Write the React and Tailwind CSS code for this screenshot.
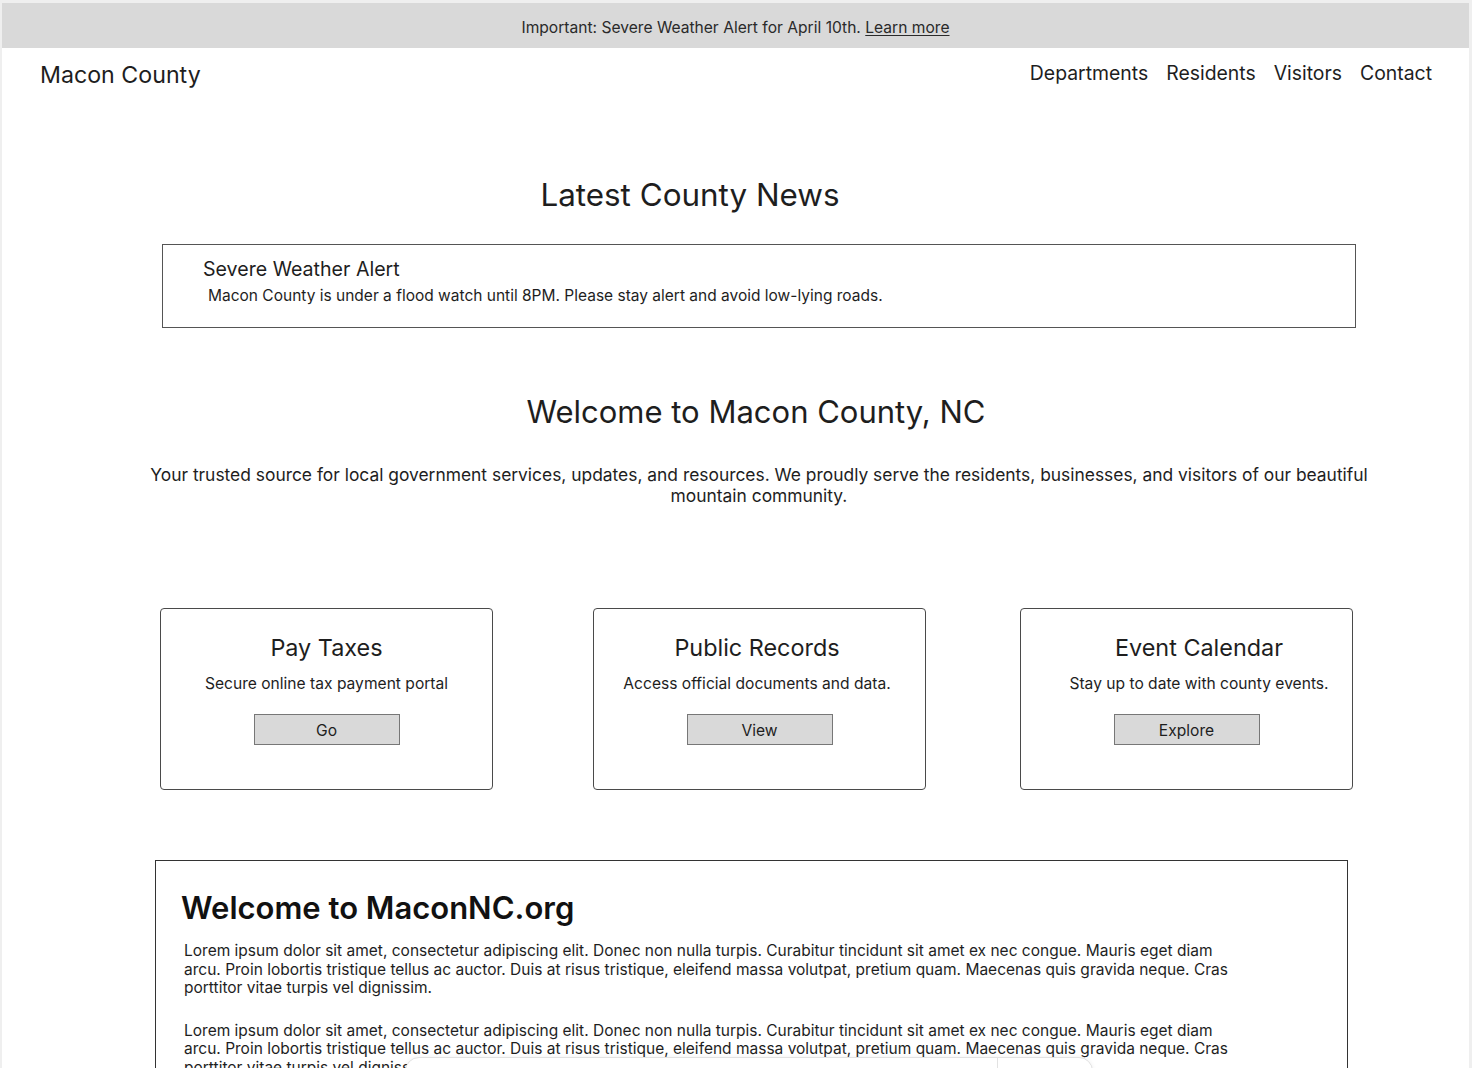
import React from "react";

const font = { fontFamily: "Inter, 'Noto Sans', sans-serif" };

function Card({ title, desc, btn, ml, shift }) {
  return (
    <div className={`w-[333px] h-[182px] border border-[#4a4a4a] rounded-[4px] flex flex-col items-center pt-[25px] ${ml}`}>
      <div className={`text-[23.4px] leading-[28px] text-[#1e1e1e] ${shift}`}>{title}</div>
      <div className={`mt-[12px] text-[15.6px] leading-[20px] text-[#1e1e1e] ${shift}`}>{desc}</div>
      <div className="mt-[20px] w-[146px] h-[31px] bg-[#d9d9d9] border border-[#777] flex items-center justify-center pt-[2px] text-[15.6px] text-[#1e1e1e]">
        {btn}
      </div>
    </div>
  );
}

const lorem =
  "Lorem ipsum dolor sit amet, consectetur adipiscing elit. Donec non nulla turpis. Curabitur tincidunt sit amet ex nec congue. Mauris eget diam arcu. Proin lobortis tristique tellus ac auctor. Duis at risus tristique, eleifend massa volutpat, pretium quam. Maecenas quis gravida neque. Cras porttitor vitae turpis vel dignissim.";

export default function App() {
  return (
    <div style={font} className="relative w-[1472px] h-[1068px] overflow-hidden bg-[#efefef] pt-[3px] pl-[2px] pr-[3px]">
      <div className="bg-white h-full">
        {/* Banner */}
        <div className="h-[45px] bg-[#d9d9d9] flex items-center justify-center pt-[4px] text-[15.6px] text-[#2a2a2a]">
          <span>
            Important: Severe Weather Alert for April 10th.{" "}
            <span className="underline underline-offset-2">Learn more</span>
          </span>
        </div>

        {/* Nav */}
        <div className="flex items-start justify-between pl-[38px] pr-[37px] pt-[12px]">
          <div className="text-[23.2px] leading-[30px] text-[#1e1e1e]">Macon County</div>
          <nav className="flex gap-[18px] text-[19.4px] leading-[26px] text-[#1e1e1e]">
            <span>Departments</span>
            <span>Residents</span>
            <span>Visitors</span>
            <span>Contact</span>
          </nav>
        </div>

        {/* Latest News */}
        <div className="mt-[87px] ml-[388px] w-[600px] text-center text-[31.4px] leading-[36px] text-[#1e1e1e]">
          Latest County News
        </div>

        <div className="mt-[31px] ml-[160px] w-[1194px] h-[84px] border border-[#555] pl-[40px] pt-[11px]">
          <div className="text-[19.6px] leading-[24px] text-[#1e1e1e] pt-[1px]">Severe Weather Alert</div>
          <div className="mt-[5px] ml-[5px] text-[15.5px] leading-[20px] text-[#1e1e1e]">
            Macon County is under a flood watch until 8PM. Please stay alert and avoid low-lying roads.
          </div>
        </div>

        {/* Welcome */}
        <div className="mt-[65px] ml-[454px] w-[600px] text-center text-[31px] leading-[38px] text-[#1e1e1e]">
          Welcome to Macon County, NC
        </div>
        <p className="mt-[33px] ml-[137px] w-[1240px] text-center text-[17.4px] leading-[21px] text-[#1e1e1e]">
          Your trusted source for local government services, updates, and resources. We proudly serve the residents, businesses, and visitors of our beautiful mountain community.
        </p>

        {/* Cards */}
        <div className="mt-[102px] flex">
          <Card ml="ml-[158px]" shift="" title="Pay Taxes" desc="Secure online tax payment portal" btn="Go" />
          <Card ml="ml-[100px]" shift="mr-[5px]" title="Public Records" desc="Access official documents and data." btn="View" />
          <Card ml="ml-[94px]" shift="ml-[25px]" title="Event Calendar" desc="Stay up to date with county events." btn="Explore" />
        </div>

        {/* Bottom box */}
        <div className="mt-[70px] ml-[153px] w-[1193px] h-[400px] border border-[#333] pl-[25px] pt-[27px]">
          <h1 className="text-[31px] leading-[40px] font-semibold text-[#111]">Welcome to MaconNC.org</h1>
          <p className="mt-[14px] ml-[3px] w-[1058px] text-[15.5px] leading-[18.5px] text-[#1e1e1e]">{lorem}</p>
          <p className="mt-[24px] ml-[3px] w-[1058px] text-[15.5px] leading-[18.5px] text-[#1e1e1e]">{lorem}</p>
        </div>
      </div>

      {/* floating overlay at bottom */}
      <div className="absolute left-[405px] top-[1057px] w-[688px] h-[40px] bg-white rounded-t-[14px] border border-[#e2e2e2] shadow-[0_0_4px_rgba(0,0,0,0.06)]">
        <div className="absolute left-[591px] top-0 h-full w-px bg-[#e2e2e2]" />
      </div>
    </div>
  );
}
